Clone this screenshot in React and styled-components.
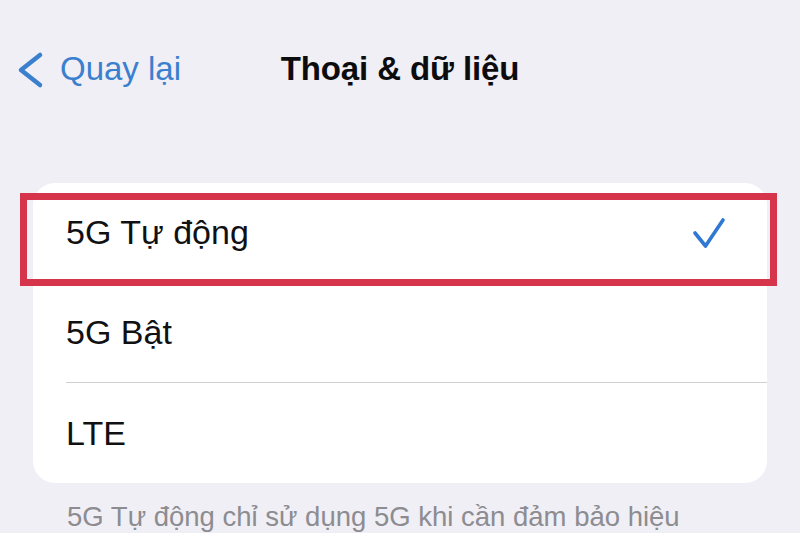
import React from "react";
import styled, { createGlobalStyle } from "styled-components";

const GlobalStyle = createGlobalStyle`
  html, body {
    margin: 0;
    padding: 0;
    background: #f0eff5;
    overflow: hidden;
  }
  body {
    font-family: "Liberation Sans", Arial, sans-serif;
    -webkit-font-smoothing: antialiased;
  }
`;

const Screen = styled.div`
  width: 800px;
  height: 533px;
  background: #f0eff5;
  overflow: hidden;
`;

const NavBar = styled.header`
  height: 134px;
  box-sizing: border-box;
  padding-top: 4px;
  display: grid;
  grid-template-columns: 1fr auto 1fr;
  align-items: center;
`;

const BackButton = styled.button`
  justify-self: start;
  display: flex;
  align-items: center;
  gap: 16px;
  padding: 0 0 0 16px;
  margin: 0;
  border: 0;
  background: none;
  color: #3a80cf;
  font-family: inherit;
  font-size: 33px;
  cursor: pointer;
`;

const Title = styled.h1`
  margin: 0;
  font-size: 33px;
  font-weight: 700;
  color: #0c0c0e;
  letter-spacing: -0.1px;
`;

const Card = styled.ul`
  list-style: none;
  margin: 49px 33px 0;
  padding: 0;
  background: #ffffff;
  border-radius: 22px;
`;

const Row = styled.li`
  position: relative;
  display: flex;
  padding-left: 33px;
`;

const RowInner = styled.div`
  flex: 1;
  height: 100px;
  display: flex;
  align-items: center;
  justify-content: space-between;
  padding-right: 41px;
  border-bottom: ${(p) => (p.$last ? "none" : "1px solid #cfcfd3")};
  box-sizing: border-box;
`;

const Label = styled.span`
  font-size: 34px;
  color: #111113;
`;

const Highlight = styled.div`
  position: absolute;
  top: 10px;
  left: -13px;
  right: -10px;
  height: 93px;
  border: 7px solid #d5344b;
  box-sizing: border-box;
  pointer-events: none;
`;

const Footer = styled.p`
  margin: 18px 0 0;
  padding-left: 67px;
  font-size: 27.5px;
  color: #8c8c91;
  white-space: nowrap;
`;

const Chevron = () => (
  <svg width="28" height="40" viewBox="0 0 28 40" fill="none">
    <path
      d="M24 6 L5 21 L24 36"
      stroke="currentColor"
      strokeWidth="4.5"
      strokeLinecap="round"
      strokeLinejoin="round"
    />
  </svg>
);

const Check = () => (
  <svg width="34" height="32" viewBox="0 0 34 32" fill="none">
    <path
      d="M3 16 L13.5 29 L31 3"
      stroke="#2f78d4"
      strokeWidth="3.6"
      strokeLinecap="round"
      strokeLinejoin="round"
    />
  </svg>
);

const options = [
  { label: "5G Tự động", selected: true },
  { label: "5G Bật" },
  { label: "LTE" },
];

export default function App() {
  return (
    <Screen>
      <GlobalStyle />
      <NavBar>
        <BackButton>
          <Chevron />
          Quay lại
        </BackButton>
        <Title>Thoại &amp; dữ liệu</Title>
        <span />
      </NavBar>
      <Card>
        {options.map((o, i) => (
          <Row key={o.label}>
            <RowInner $last={i === options.length - 1}>
              <Label>{o.label}</Label>
              {o.selected && <Check />}
            </RowInner>
            {o.selected && <Highlight />}
          </Row>
        ))}
      </Card>
      <Footer>5G Tự động chỉ sử dụng 5G khi cần đảm bảo hiệu</Footer>
    </Screen>
  );
}
